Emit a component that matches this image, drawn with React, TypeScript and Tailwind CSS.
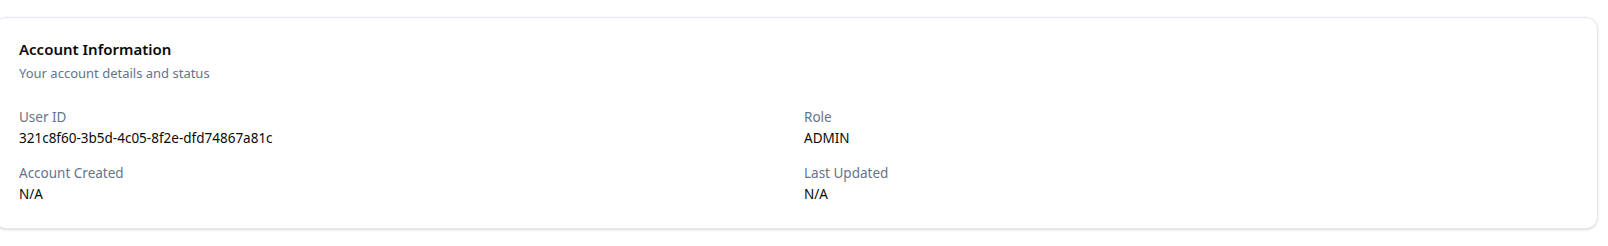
const fields = [
  { label: "User ID", value: "321c8f60-3b5d-4c05-8f2e-dfd74867a81c" },
  { label: "Role", value: "ADMIN" },
  { label: "Account Created", value: "N/A" },
  { label: "Last Updated", value: "N/A" },
];

const App = () => {
  return (
    <div
      className="w-[1608px] h-[246px] bg-white pt-[17px] overflow-hidden"
      style={{ fontFamily: '"Noto Sans", "Open Sans", sans-serif' }}
    >
      <article className="-ml-[6px] w-[1604px] rounded-xl border border-[#e2e8f0] bg-white shadow-sm px-6 pt-6 pb-[23px]">
        <div className="flex flex-col gap-[6px]">
          <h2 className="text-[15px] leading-none font-semibold text-[#0a0a0a]">
            Account Information
          </h2>
          <p className="text-[13px] leading-[20px] text-[#64748b]">
            Your account details and status
          </p>
        </div>
        <div className="mt-[24px] grid grid-cols-2 gap-x-4 gap-y-[14px]">
          {fields.map(({ label, value }) => (
            <div key={label} className="flex flex-col">
              <p className="text-[13.5px] leading-[21px] text-[#64748b]">{label}</p>
              <p className="text-[13.5px] leading-[21px] text-[#0a0a0a]">{value}</p>
            </div>
          ))}
        </div>
      </article>
    </div>
  );
};

export default App;
